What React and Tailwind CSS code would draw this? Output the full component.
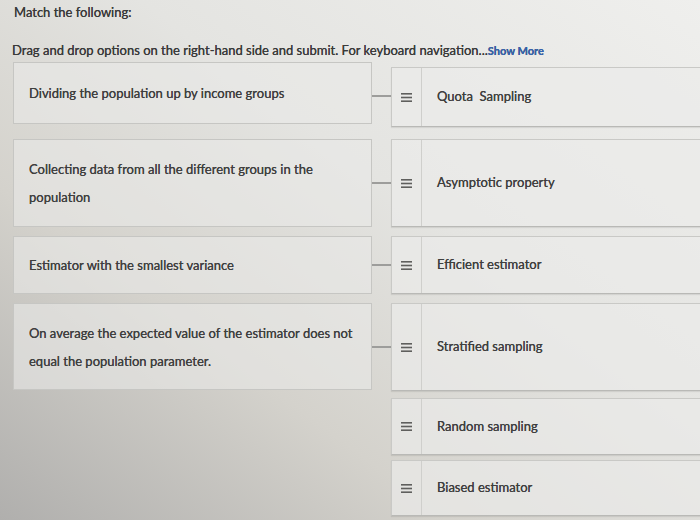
import React from "react";

const rows = [
  { left: ["Dividing the population up by income groups"], right: "Quota\u00a0 Sampling", h: "h-[62px]", rh: "h-[60px]", mt: "mt-[5px]" },
  { left: ["Collecting data from all the different groups in the", "population"], right: "Asymptotic property", h: "h-[88px]", rh: "h-[88px]", mt: "mt-0" },
  { left: ["Estimator with the smallest variance"], right: "Efficient estimator", h: "h-[58px]", rh: "h-[58px]", mt: "mt-0" },
  { left: ["On average the expected value of the estimator does not", "equal the population parameter."], right: "Stratified sampling", h: "h-[87px]", rh: "h-[88px]", mt: "mt-0" },
];

const extra = [
  { right: "Random sampling", rh: "h-[57px]" },
  { right: "Biased estimator", rh: "h-[56px]" },
];

const Handle = () => (
  <div className="w-[30px] h-full flex items-center justify-center border-r border-[#cfcfcc]">
    <svg width="11" height="9" viewBox="0 0 11 9">
      <rect x="0" y="0" width="11" height="1.6" fill="#5f5f5d" />
      <rect x="0" y="3.7" width="11" height="1.6" fill="#5f5f5d" />
      <rect x="0" y="7.4" width="11" height="1.6" fill="#5f5f5d" />
    </svg>
  </div>
);

const RightCard = ({ label, h, mt }) => (
  <div className={`w-[330px] shrink-0 ${h} ${mt} flex items-center border border-[#c9c9c6] border-b-[#b9b9b6] bg-[#ebebe9]/70 shadow-[0_1px_1px_rgba(0,0,0,0.08)]`}>
    <Handle />
    <span className="pl-[15px] text-[13px] text-[#3f3f3f] [text-shadow:0_0_0.4px_#3f3f3f]">{label}</span>
  </div>
);

const App = () => {
  return (
    <div
      className="w-[700px] h-[520px] overflow-hidden bg-[linear-gradient(to_top_right,#b0afad,#d4d2cc_32%,#e4e4e1_60%,#efefed)] text-[#454545]"
      style={{ fontFamily: "Lato, 'Open Sans', sans-serif" }}
    >
      {/* Header */}
      <div className="pl-[14px] pt-[3px] text-[13px] text-[#3a3a3a] [text-shadow:0_0_0.4px_#3a3a3a]">Match the following:</div>
      <div className="pl-[12px] mt-[18px] text-[13px] text-[#3a3a3a] [text-shadow:0_0_0.4px_#3a3a3a]">
        Drag and drop options on the right-hand side and submit. For keyboard navigation...
        <span className="text-[11px] font-bold text-[#3465b5]">Show More</span>
      </div>

      {/* Matching rows */}
      <div className="mt-[2px] pl-[13px] flex flex-col gap-[9px]">
        {rows.map((r, i) => (
          <div key={i} className="flex items-start">
            <div className={`w-[359px] shrink-0 ${r.h} flex flex-col justify-center px-[15px] border border-[#c6c6c3] bg-[#e9e9e7]/60`}>
              {r.left.map((t, j) => (
                <div key={j} className="text-[13px] leading-[28px] text-[#3f3f3f] [text-shadow:0_0_0.4px_#3f3f3f]">{t}</div>
              ))}
            </div>
            <div className={`w-[19px] shrink-0 flex items-center ${i === 0 ? "h-[68px]" : r.h}`}>
              <div className="w-full h-[2px] bg-[#9d9d9b]" />
            </div>
            <RightCard label={r.right} h={r.rh} mt={r.mt} />
          </div>
        ))}
        {extra.map((r, i) => (
          <div key={i} className={`flex ${i === 0 ? "-mt-[2px]" : "-mt-[4px]"}`}>
            <div className="w-[378px] shrink-0" />
            <RightCard label={r.right} h={r.rh} mt="mt-0" />
          </div>
        ))}
      </div>
    </div>
  );
};

export default App;
